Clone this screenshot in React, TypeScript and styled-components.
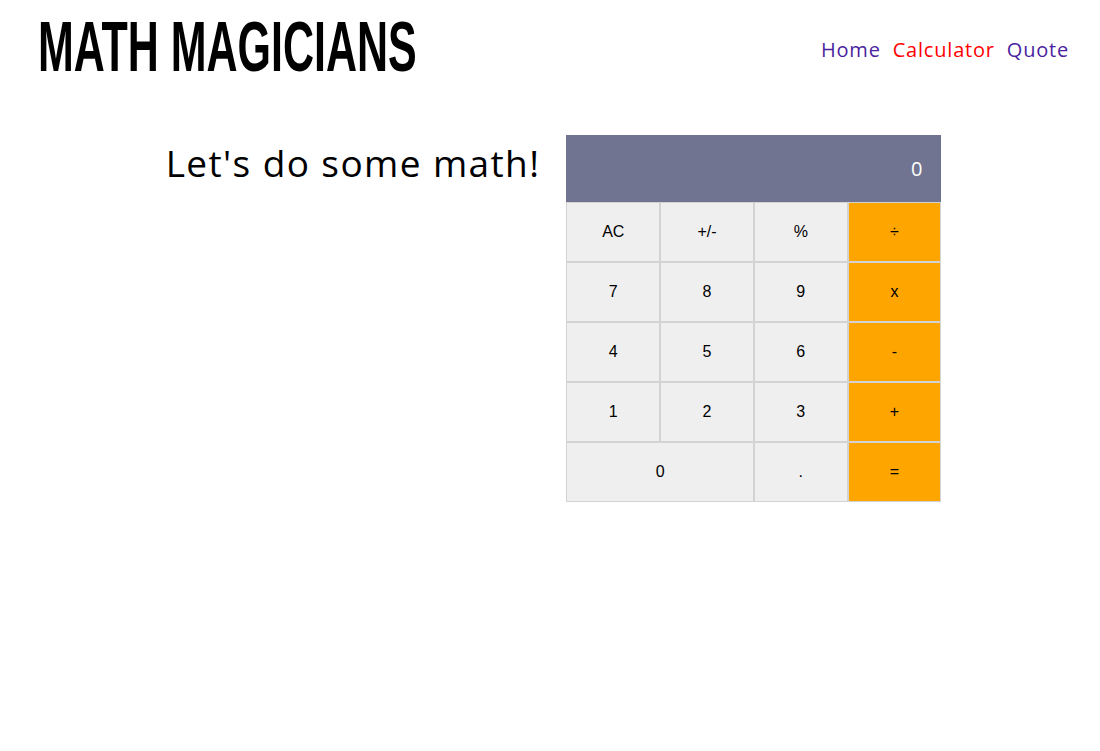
import React, { useState } from 'react'
import styled, { createGlobalStyle } from 'styled-components'

const GlobalStyle = createGlobalStyle`
  body {
    margin: 0;
    background: #fff;
    font-family: 'Open Sans', 'Liberation Sans', sans-serif;
  }
`

const Header = styled.header`
  display: flex;
  justify-content: space-between;
  align-items: center;
  padding: 0 31px 0 38px;
  height: 96px;
`

const Logo = styled.h1`
  margin: 0 0 4px;
  font-family: 'Liberation Sans Narrow', 'Liberation Sans', sans-serif;
  font-weight: 700;
  font-size: 71px;
  line-height: 1;
  transform: scaleX(0.605);
  transform-origin: left center;
  white-space: nowrap;
  width: 382px;
`

const Nav = styled.nav`
  display: flex;
  gap: 12px;
  padding-top: 2px;
`

const NavLink = styled.a<{ active?: boolean }>`
  font-size: 20px;
  letter-spacing: 0.8px;
  color: ${({ active }) => (active ? '#ff0000' : '#4b1fa0')};
  text-decoration: none;
  cursor: pointer;
`

const Main = styled.main`
  display: flex;
  justify-content: center;
  align-items: flex-start;
  gap: 26px;
  padding-top: 39px;
  padding-left: 7px;
`

const Heading = styled.h2`
  margin: 2px 0 0;
  font-weight: 400;
  font-size: 37px;
  letter-spacing: 1.4px;
  color: #000;
  white-space: nowrap;
`

const Calculator = styled.div`
  width: 375px;
  display: grid;
  grid-template-columns: repeat(4, 1fr);
`

const Display = styled.div`
  grid-column: span 4;
  height: 67px;
  background: #717490;
  color: #fff;
  display: flex;
  align-items: center;
  justify-content: flex-end;
  padding-right: 19px;
  font-size: 20px;
  font-family: 'Open Sans', sans-serif;
`

const Key = styled.button<{ op?: boolean; wide?: boolean }>`
  height: 60px;
  margin: 0;
  border: 1px solid #d3d3d3;
  background: ${({ op }) => (op ? '#ffa500' : '#efefef')};
  grid-column: ${({ wide }) => (wide ? 'span 2' : 'auto')};
  font-family: 'Liberation Sans', Arial, sans-serif;
  font-size: 16px;
  color: #000;
  cursor: pointer;
`

const keys: { label: string; op?: boolean; wide?: boolean }[] = [
  { label: 'AC' },
  { label: '+/-' },
  { label: '%' },
  { label: '÷', op: true },
  { label: '7' },
  { label: '8' },
  { label: '9' },
  { label: 'x', op: true },
  { label: '4' },
  { label: '5' },
  { label: '6' },
  { label: '-', op: true },
  { label: '1' },
  { label: '2' },
  { label: '3' },
  { label: '+', op: true },
  { label: '0', wide: true },
  { label: '.' },
  { label: '=', op: true },
]

export default function App() {
  const [total] = useState('0')

  return (
    <>
      <GlobalStyle />
      <Header>
        <Logo>MATH MAGICIANS</Logo>
        <Nav>
          <NavLink>Home</NavLink>
          <NavLink active>Calculator</NavLink>
          <NavLink>Quote</NavLink>
        </Nav>
      </Header>
      <Main>
        <Heading>Let&apos;s do some math!</Heading>
        <Calculator>
          <Display>{total}</Display>
          {keys.map((k) => (
            <Key key={k.label} op={k.op} wide={k.wide} type="button">
              {k.label}
            </Key>
          ))}
        </Calculator>
      </Main>
    </>
  )
}
